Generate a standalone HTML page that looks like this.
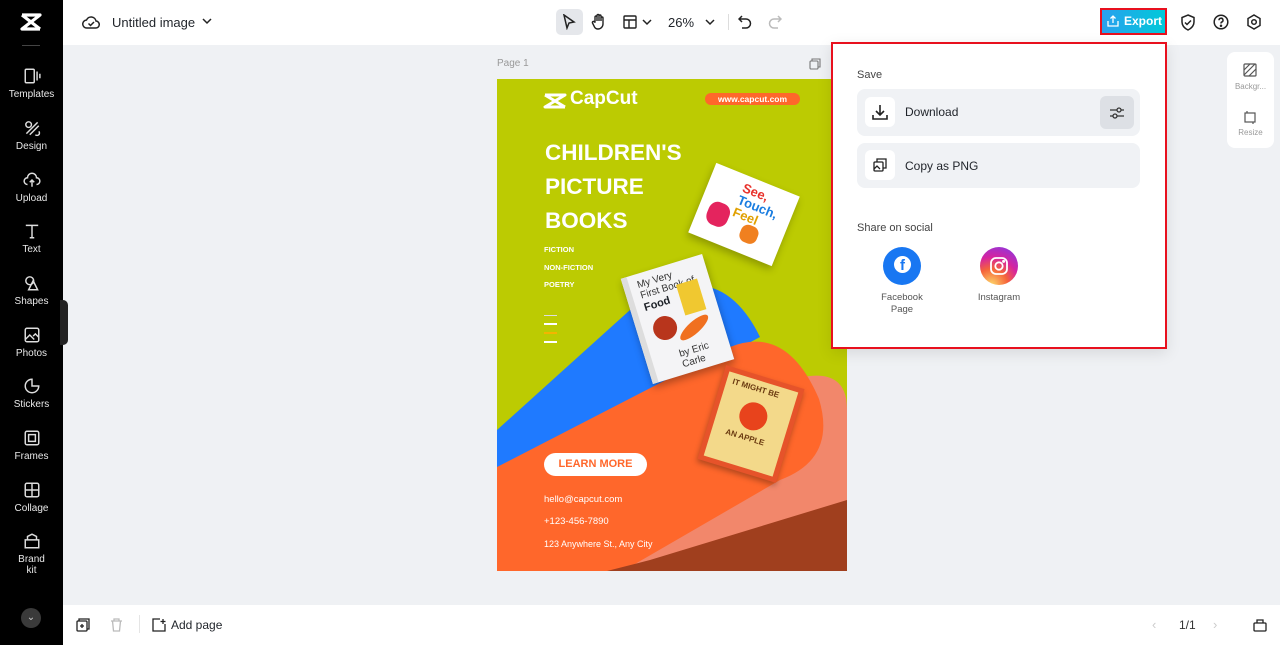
<!DOCTYPE html>
<html><head><meta charset="utf-8"><style>
*{margin:0;padding:0;box-sizing:border-box}
body{width:1280px;height:645px;overflow:hidden;background:#eff1f4;font-family:"Liberation Sans",sans-serif;position:relative;color:#1f2329}
.abs{position:absolute}
#side{left:0;top:0;width:63px;height:645px;background:#000}
.si{position:absolute;left:0;width:63px;text-align:center;color:#e8e8e8;font-size:10px}
.si svg{display:block;margin:0 auto 4px}
#top{left:63px;top:0;width:1217px;height:45px;background:#fff}
#bot{left:63px;top:605px;width:1217px;height:40px;background:#fff}
.row{position:absolute;left:857px;width:283px;background:#f0f2f5;border-radius:8px}
.ib{position:absolute;left:8px;width:30px;height:30px;background:#fff;border-radius:6px}
</style></head><body>
<div id="side" class="abs">
 <svg class="abs" style="left:20px;top:12px" width="22" height="20" viewBox="0 0 22 20"><path d="M2 3h18L2 17h18" stroke="#fff" stroke-width="3.2" fill="none" stroke-linejoin="round"/><path d="M2 3 L20 17" stroke="#fff" stroke-width="3.2"/></svg>
 <div class="abs" style="left:22px;top:45px;width:18px;height:1px;background:#444"></div>
 <div class="si" style="top:67px"><svg width="18" height="18" viewBox="0 0 16 16" fill="none" stroke="#ddd" stroke-width="1.3"><rect x="2" y="2" width="8" height="12" rx="1"/><path d="M12.5 4v8M15 6v4"/></svg>Templates</div>
 <div class="si" style="top:119px"><svg width="18" height="18" viewBox="0 0 16 16" fill="none" stroke="#ddd" stroke-width="1.3"><circle cx="5" cy="5" r="2.5"/><path d="M3 13l10-10M6 14l8-8M11 14a2 2 0 0 0 3-3"/></svg>Design</div>
 <div class="si" style="top:171px"><svg width="18" height="18" viewBox="0 0 16 16" fill="none" stroke="#ddd" stroke-width="1.3"><path d="M4 12a3 3 0 0 1 0-6a4 4 0 0 1 8 0a3 3 0 0 1 0 6M8 14V8M6 10l2-2 2 2"/></svg>Upload</div>
 <div class="si" style="top:222px"><svg width="18" height="18" viewBox="0 0 16 16" fill="none" stroke="#ddd" stroke-width="1.3"><path d="M2.5 3h11M8 3v11M6 14h4"/></svg>Text</div>
 <div class="si" style="top:274px"><svg width="18" height="18" viewBox="0 0 16 16" fill="none" stroke="#ddd" stroke-width="1.3"><circle cx="6" cy="6" r="3.5"/><path d="M9 6l4 8H5z"/></svg>Shapes</div>
 <div class="si" style="top:326px"><svg width="18" height="18" viewBox="0 0 16 16" fill="none" stroke="#ddd" stroke-width="1.3"><rect x="2" y="2" width="12" height="12" rx="1.5"/><path d="M2 12l4-4 4 4M9 9l2-2 3 3"/></svg>Photos</div>
 <div class="si" style="top:377px"><svg width="18" height="18" viewBox="0 0 16 16" fill="none" stroke="#ddd" stroke-width="1.3"><path d="M8 2a6 6 0 1 0 6 6H8z"/></svg>Stickers</div>
 <div class="si" style="top:429px"><svg width="18" height="18" viewBox="0 0 16 16" fill="none" stroke="#ddd" stroke-width="1.3"><rect x="2" y="2" width="12" height="12" rx="1.5"/><rect x="5" y="5" width="6" height="6"/></svg>Frames</div>
 <div class="si" style="top:481px"><svg width="18" height="18" viewBox="0 0 16 16" fill="none" stroke="#ddd" stroke-width="1.3"><rect x="2" y="2" width="12" height="12" rx="1.5"/><path d="M8 2v12M2 8h12"/></svg>Collage</div>
 <div class="si" style="top:532px"><svg width="18" height="18" viewBox="0 0 16 16" fill="none" stroke="#ddd" stroke-width="1.3"><path d="M2 7h12v7H2zM4 7V4l4-2 4 2v3"/></svg>Brand<br>kit</div>
 <div class="abs" style="left:21px;top:608px;width:20px;height:20px;border-radius:50%;background:#3a3a3a;color:#ccc;font-size:10px;text-align:center;line-height:20px">⌄</div>
 <div class="abs" style="left:60px;top:300px;width:8px;height:45px;background:#222;border-radius:0 5px 5px 0"></div>
</div>

<div id="top" class="abs"></div>
<svg class="abs" style="left:82px;top:14px" width="18" height="16" viewBox="0 0 18 16" fill="none" stroke="#222" stroke-width="1.5"><path d="M5 14a4 4 0 0 1-.5-8a5 5 0 0 1 9.5 1a3.5 3.5 0 0 1-.5 7z"/><path d="M6.5 9.5l2 2 3.5-3.5"/></svg>
<div class="abs" style="left:112px;top:15px;font-size:13px;color:#1f2329">Untitled image</div>
<svg class="abs" style="left:202px;top:17px" width="10" height="8" viewBox="0 0 10 8" fill="none" stroke="#222" stroke-width="1.5"><path d="M1 2l4 4 4-4"/></svg>
<div class="abs" style="left:556px;top:9px;width:27px;height:26px;background:#e5e7eb;border-radius:5px"></div>
<svg class="abs" style="left:562px;top:14px" width="14" height="16" viewBox="0 0 14 16" fill="none" stroke="#222" stroke-width="1.5"><path d="M2 1l10 7-5 1-2 5z"/></svg>
<svg class="abs" style="left:591px;top:13px" width="16" height="17" viewBox="0 0 16 17" fill="none" stroke="#222" stroke-width="1.4"><path d="M4 9V4a1 1 0 0 1 2 0v4V2.5a1 1 0 0 1 2 0V8V3a1 1 0 0 1 2 0v5V5a1 1 0 0 1 2 0v6a5 5 0 0 1-5 5a4 4 0 0 1-3.5-2L1.5 10a1 1 0 0 1 2-1z"/></svg>
<svg class="abs" style="left:623px;top:15px" width="14" height="14" viewBox="0 0 14 14" fill="none" stroke="#222" stroke-width="1.4"><rect x="1" y="1" width="12" height="12" rx="1"/><path d="M1 5h12M6 5v8"/></svg>
<svg class="abs" style="left:642px;top:18px" width="10" height="8" viewBox="0 0 10 8" fill="none" stroke="#222" stroke-width="1.5"><path d="M1 2l4 4 4-4"/></svg>
<div class="abs" style="left:668px;top:15px;font-size:13px">26%</div>
<svg class="abs" style="left:705px;top:18px" width="10" height="8" viewBox="0 0 10 8" fill="none" stroke="#222" stroke-width="1.5"><path d="M1 2l4 4 4-4"/></svg>
<div class="abs" style="left:728px;top:14px;width:1px;height:16px;background:#ddd"></div>
<svg class="abs" style="left:738px;top:15px" width="14" height="14" viewBox="0 0 14 14" fill="none" stroke="#222" stroke-width="1.5"><path d="M4 1L1 4l3 3M1 4h7a4.5 4.5 0 0 1 0 9H4"/></svg>
<svg class="abs" style="left:768px;top:15px" width="14" height="14" viewBox="0 0 14 14" fill="none" stroke="#bbb" stroke-width="1.5"><path d="M10 1l3 3-3 3M13 4H6a4.5 4.5 0 0 0 0 9h4"/></svg>

<div class="abs" style="left:1100px;top:8px;width:67px;height:27px;border:2px solid #e8101e;background:linear-gradient(90deg,#2aa0ee,#00c9d9);color:#fff;font-weight:bold;font-size:12px;line-height:23px;padding-left:22px">Export</div>
<svg class="abs" style="left:1107px;top:15px" width="12" height="12" viewBox="0 0 12 12" fill="none" stroke="#fff" stroke-width="1.3"><path d="M6 8V1M3.5 3.5L6 1l2.5 2.5M1 6v5h10V6"/></svg>
<svg class="abs" style="left:1180px;top:14px" width="16" height="17" viewBox="0 0 16 17" fill="none" stroke="#222" stroke-width="1.5"><path d="M8 1l6 2.5v4.5c0 4-3 6.5-6 8c-3-1.5-6-4-6-8V3.5z"/><path d="M5 8.5l2 2 4-4"/></svg>
<svg class="abs" style="left:1213px;top:14px" width="16" height="16" viewBox="0 0 16 16" fill="none" stroke="#222" stroke-width="1.5"><circle cx="8" cy="8" r="6.8"/><path d="M6 6.2a2 2 0 1 1 2.6 1.9c-.6.2-.6.7-.6 1.4"/><circle cx="8" cy="11.8" r=".5" fill="#222"/></svg>
<svg class="abs" style="left:1246px;top:14px" width="16" height="16" viewBox="0 0 16 16" fill="none" stroke="#222" stroke-width="1.5"><path d="M8 1l6 3.5v7L8 15l-6-3.5v-7z"/><circle cx="8" cy="8" r="2.3"/></svg>

<!-- page -->
<div class="abs" style="left:497px;top:58px;font-size:10px;color:#999">Page 1</div>
<svg class="abs" style="left:809px;top:58px" width="12" height="12" viewBox="0 0 12 12" fill="none" stroke="#777" stroke-width="1.1"><rect x="1" y="3" width="8" height="8" rx="1"/><path d="M3 3V1h8v8H9"/></svg>
<div class="abs" style="left:497px;top:79px;width:350px;height:492px;overflow:hidden;background:#bccb02">
 <svg class="abs" style="left:0;top:0" width="350" height="492" viewBox="0 0 350 492">
  <path d="M0 351 L133 231 Q220 170 263 258 L0 400Z" fill="#1f7aff"/>
  <path d="M306 298 Q350 290 350 330 L350 492 L100 492Z" fill="#f2876b"/>
  <path d="M0 388 L233 268 Q290 245 322 320 Q340 380 283 401 L126 492 L0 492Z" fill="#ff672b"/>
  <path d="M110 492 L153 481 L350 421 L350 492Z" fill="#a03f1e"/>
 </svg>
 <svg class="abs" style="left:46px;top:14px" width="24" height="16" viewBox="0 0 24 16"><path d="M2 2h20L2 14h20M2 2l20 12" stroke="#fff" stroke-width="3" fill="none" stroke-linejoin="round"/></svg>
 <div class="abs" style="left:73px;top:9px;color:#fff;font-size:19px;font-weight:bold">CapCut</div>
 <div class="abs" style="left:208px;top:14px;width:95px;height:12px;background:#ff672b;border-radius:6px;color:#fff;font-size:8.5px;font-weight:bold;text-align:center;line-height:12px">www.capcut.com</div>
 <div class="abs" style="left:48px;top:57px;color:#fff;font-size:22.5px;font-weight:bold;line-height:34px">CHILDREN'S<br>PICTURE<br>BOOKS</div>
 <div class="abs" style="left:47px;top:162px;color:#fff;font-size:7.5px;font-weight:bold;line-height:17.5px">FICTION<br>NON-FICTION<br>POETRY</div>
 <div class="abs" style="left:47px;top:236px;width:13px;height:1px;background:#ddd"></div>
 <div class="abs" style="left:47px;top:244px;width:13px;height:1.5px;background:#fff"></div>
 <div class="abs" style="left:47px;top:253px;width:13px;height:2px;background:#f4b400"></div>
 <div class="abs" style="left:47px;top:262px;width:13px;height:1.5px;background:#fff"></div>
 <div class="abs" style="left:202px;top:98px;width:90px;height:75px;background:#fff;transform:rotate(22deg);box-shadow:0 4px 8px rgba(0,0,0,.25)">
  <div style="position:absolute;left:34px;top:6px;font-size:13px;font-weight:bold;color:#e8302a;line-height:13px">See, <span style="color:#1a7de0">Touch,</span><br><span style="color:#e0a000">Feel</span></div>
  <div style="position:absolute;left:10px;top:35px;width:22px;height:24px;background:#e4245e;border-radius:40%"></div>
  <div style="position:absolute;left:48px;top:45px;width:18px;height:18px;background:#f08020;border-radius:40%"></div>
 </div>
 <div class="abs" style="left:138px;top:185px;width:85px;height:110px;background:#f4f4f6;transform:rotate(-17deg);box-shadow:0 4px 8px rgba(0,0,0,.3);border-left:6px solid #ddd">
  <div style="position:absolute;left:8px;top:6px;font-size:10px;line-height:11px;color:#333">My Very<br>First Book of</div>
  <div style="position:absolute;left:8px;top:29px;font-size:11px;font-weight:bold">Food</div>
  <div style="position:absolute;left:45px;top:22px;width:22px;height:32px;background:#f0c830"></div>
  <div style="position:absolute;left:10px;top:48px;width:24px;height:24px;background:#b8351c;border-radius:50%"></div>
  <div style="position:absolute;left:32px;top:62px;width:36px;height:12px;background:#f07020;border-radius:50%;transform:rotate(-25deg)"></div>
  <div style="position:absolute;left:28px;top:84px;font-size:10px;color:#333">by Eric Carle</div>
 </div>
 <div class="abs" style="left:213px;top:296px;width:82px;height:98px;background:#e6532a;transform:rotate(17deg);box-shadow:0 3px 6px rgba(0,0,0,.3);padding:5px">
  <div style="width:100%;height:100%;background:#f3d98a;position:relative">
   <div style="position:absolute;left:22px;top:22px;width:28px;height:28px;background:#e8431c;border-radius:50%"></div>
   <div style="position:absolute;left:6px;top:4px;font-size:8px;font-weight:bold;color:#6a3a10">IT MIGHT BE</div>
   <div style="position:absolute;left:14px;top:54px;font-size:8px;font-weight:bold;color:#6a3a10">AN APPLE</div>
  </div>
 </div>
 <div class="abs" style="left:47px;top:374px;width:103px;height:23px;background:#fff;border-radius:12px;color:#ff672b;font-size:11px;font-weight:bold;text-align:center;line-height:23px">LEARN MORE</div>
 <div class="abs" style="left:47px;top:410px;color:#fff;font-size:9.5px;line-height:22px">hello@capcut.com<br>+123-456-7890<br><span style="font-size:9px">123 Anywhere St., Any City</span></div>
</div>

<!-- right mini panel -->
<div class="abs" style="left:1227px;top:52px;width:47px;height:96px;background:#fff;border-radius:8px"></div>
<svg class="abs" style="left:1243px;top:63px" width="14" height="14" viewBox="0 0 14 14" fill="none" stroke="#555" stroke-width="1.2"><rect x="1" y="1" width="12" height="12" rx="1"/><path d="M1 7l6-6M1 12L12 1M6 13l7-7"/></svg>
<div class="abs" style="left:1227px;top:82px;width:47px;text-align:center;font-size:8px;color:#999">Backgr...</div>
<svg class="abs" style="left:1243px;top:110px" width="14" height="14" viewBox="0 0 14 14" fill="none" stroke="#555" stroke-width="1.2"><rect x="2" y="3" width="10" height="9"/><path d="M4 1v2M10 12v2"/></svg>
<div class="abs" style="left:1227px;top:128px;width:47px;text-align:center;font-size:8px;color:#999">Resize</div>

<!-- dropdown -->
<div class="abs" style="left:831px;top:42px;width:336px;height:307px;background:#fff;border:2px solid #e8101e;box-shadow:0 4px 14px rgba(0,0,0,.1)"></div>
<div class="abs" style="left:857px;top:69px;font-size:11px;color:#444">Save</div>
<div class="row" style="top:89px;height:47px"><div class="ib" style="top:8px"></div>
 <div class="abs" style="left:243px;top:7px;width:34px;height:33px;background:#dde0e5;border-radius:6px"></div>
 <div class="abs" style="left:48px;top:16px;font-size:12px;color:#1f2329">Download</div></div>
<svg class="abs" style="left:872px;top:104px" width="16" height="16" viewBox="0 0 16 16" fill="none" stroke="#222" stroke-width="1.6"><path d="M8 1v10M4 7l4 4 4-4M1 11v4h14v-4"/></svg>
<svg class="abs" style="left:1109px;top:105px" width="16" height="16" viewBox="0 0 16 16" fill="none" stroke="#333" stroke-width="1.3"><path d="M1 5h14M1 11h14"/><circle cx="10" cy="5" r="2" fill="#dde0e5"/><circle cx="6" cy="11" r="2" fill="#dde0e5"/></svg>
<div class="row" style="top:143px;height:45px"><div class="ib" style="top:7px"></div>
 <div class="abs" style="left:48px;top:16px;font-size:12px;color:#1f2329">Copy as PNG</div></div>
<svg class="abs" style="left:873px;top:158px" width="14" height="14" viewBox="0 0 14 14" fill="none" stroke="#222" stroke-width="1.3"><rect x="1" y="4" width="9" height="9" rx="1"/><path d="M4 4V1h9v9h-3M1 11l3-3 3 3"/></svg>
<div class="abs" style="left:857px;top:222px;font-size:11px;color:#444">Share on social</div>
<div class="abs" style="left:883px;top:247px;width:38px;height:38px;border-radius:50%;background:#1877f2"></div>
<div class="abs" style="left:894px;top:256px;width:17px;height:17px;border-radius:50%;background:#fff;color:#1877f2;font-weight:bold;font-size:15px;text-align:center;line-height:20px;overflow:hidden">f</div>
<div class="abs" style="left:862px;top:292px;width:80px;text-align:center;font-size:9.5px;color:#555;line-height:12px">Facebook<br>Page</div>
<div class="abs" style="left:980px;top:247px;width:38px;height:38px;border-radius:50%;background:radial-gradient(circle at 30% 100%,#fdd86a,#f5643a 35%,#d6249f 60%,#7a3cf0)"></div>
<svg class="abs" style="left:989px;top:256px" width="20" height="20" viewBox="0 0 20 20" fill="none" stroke="#fff" stroke-width="1.8"><rect x="2" y="2" width="16" height="16" rx="5"/><circle cx="10" cy="10" r="3.7"/><circle cx="14.6" cy="5.4" r=".6" fill="#fff"/></svg>
<div class="abs" style="left:959px;top:292px;width:80px;text-align:center;font-size:9.5px;color:#555">Instagram</div>

<!-- bottom -->
<div id="bot" class="abs"></div>
<svg class="abs" style="left:76px;top:618px" width="14" height="14" viewBox="0 0 14 14" fill="none" stroke="#222" stroke-width="1.3"><rect x="1" y="3" width="10" height="10" rx="1"/><path d="M3 3V1h10v10h-2M6 6v4M4 8h4"/></svg>
<svg class="abs" style="left:110px;top:618px" width="13" height="14" viewBox="0 0 13 14" fill="none" stroke="#bbb" stroke-width="1.3"><path d="M1 3h11M4 3V1h5v2M2.5 3l1 10h6l1-10"/></svg>
<div class="abs" style="left:139px;top:615px;width:1px;height:18px;background:#e5e5e5"></div>
<svg class="abs" style="left:152px;top:618px" width="14" height="14" viewBox="0 0 14 14" fill="none" stroke="#222" stroke-width="1.3"><path d="M8 1H1v12h12V6M11 1v5M8.5 3.5h5"/></svg>
<div class="abs" style="left:171px;top:618px;font-size:12px;color:#1f2329">Add page</div>
<div class="abs" style="left:1152px;top:617px;font-size:13px;color:#ccc">‹</div>
<div class="abs" style="left:1179px;top:618px;font-size:12px;color:#333">1/1</div>
<div class="abs" style="left:1213px;top:617px;font-size:13px;color:#ccc">›</div>
<svg class="abs" style="left:1253px;top:618px" width="14" height="14" viewBox="0 0 14 14" fill="none" stroke="#222" stroke-width="1.3"><rect x="1" y="5" width="12" height="8" rx="1"/><path d="M4 5V2h6v3"/></svg>
</body></html>
